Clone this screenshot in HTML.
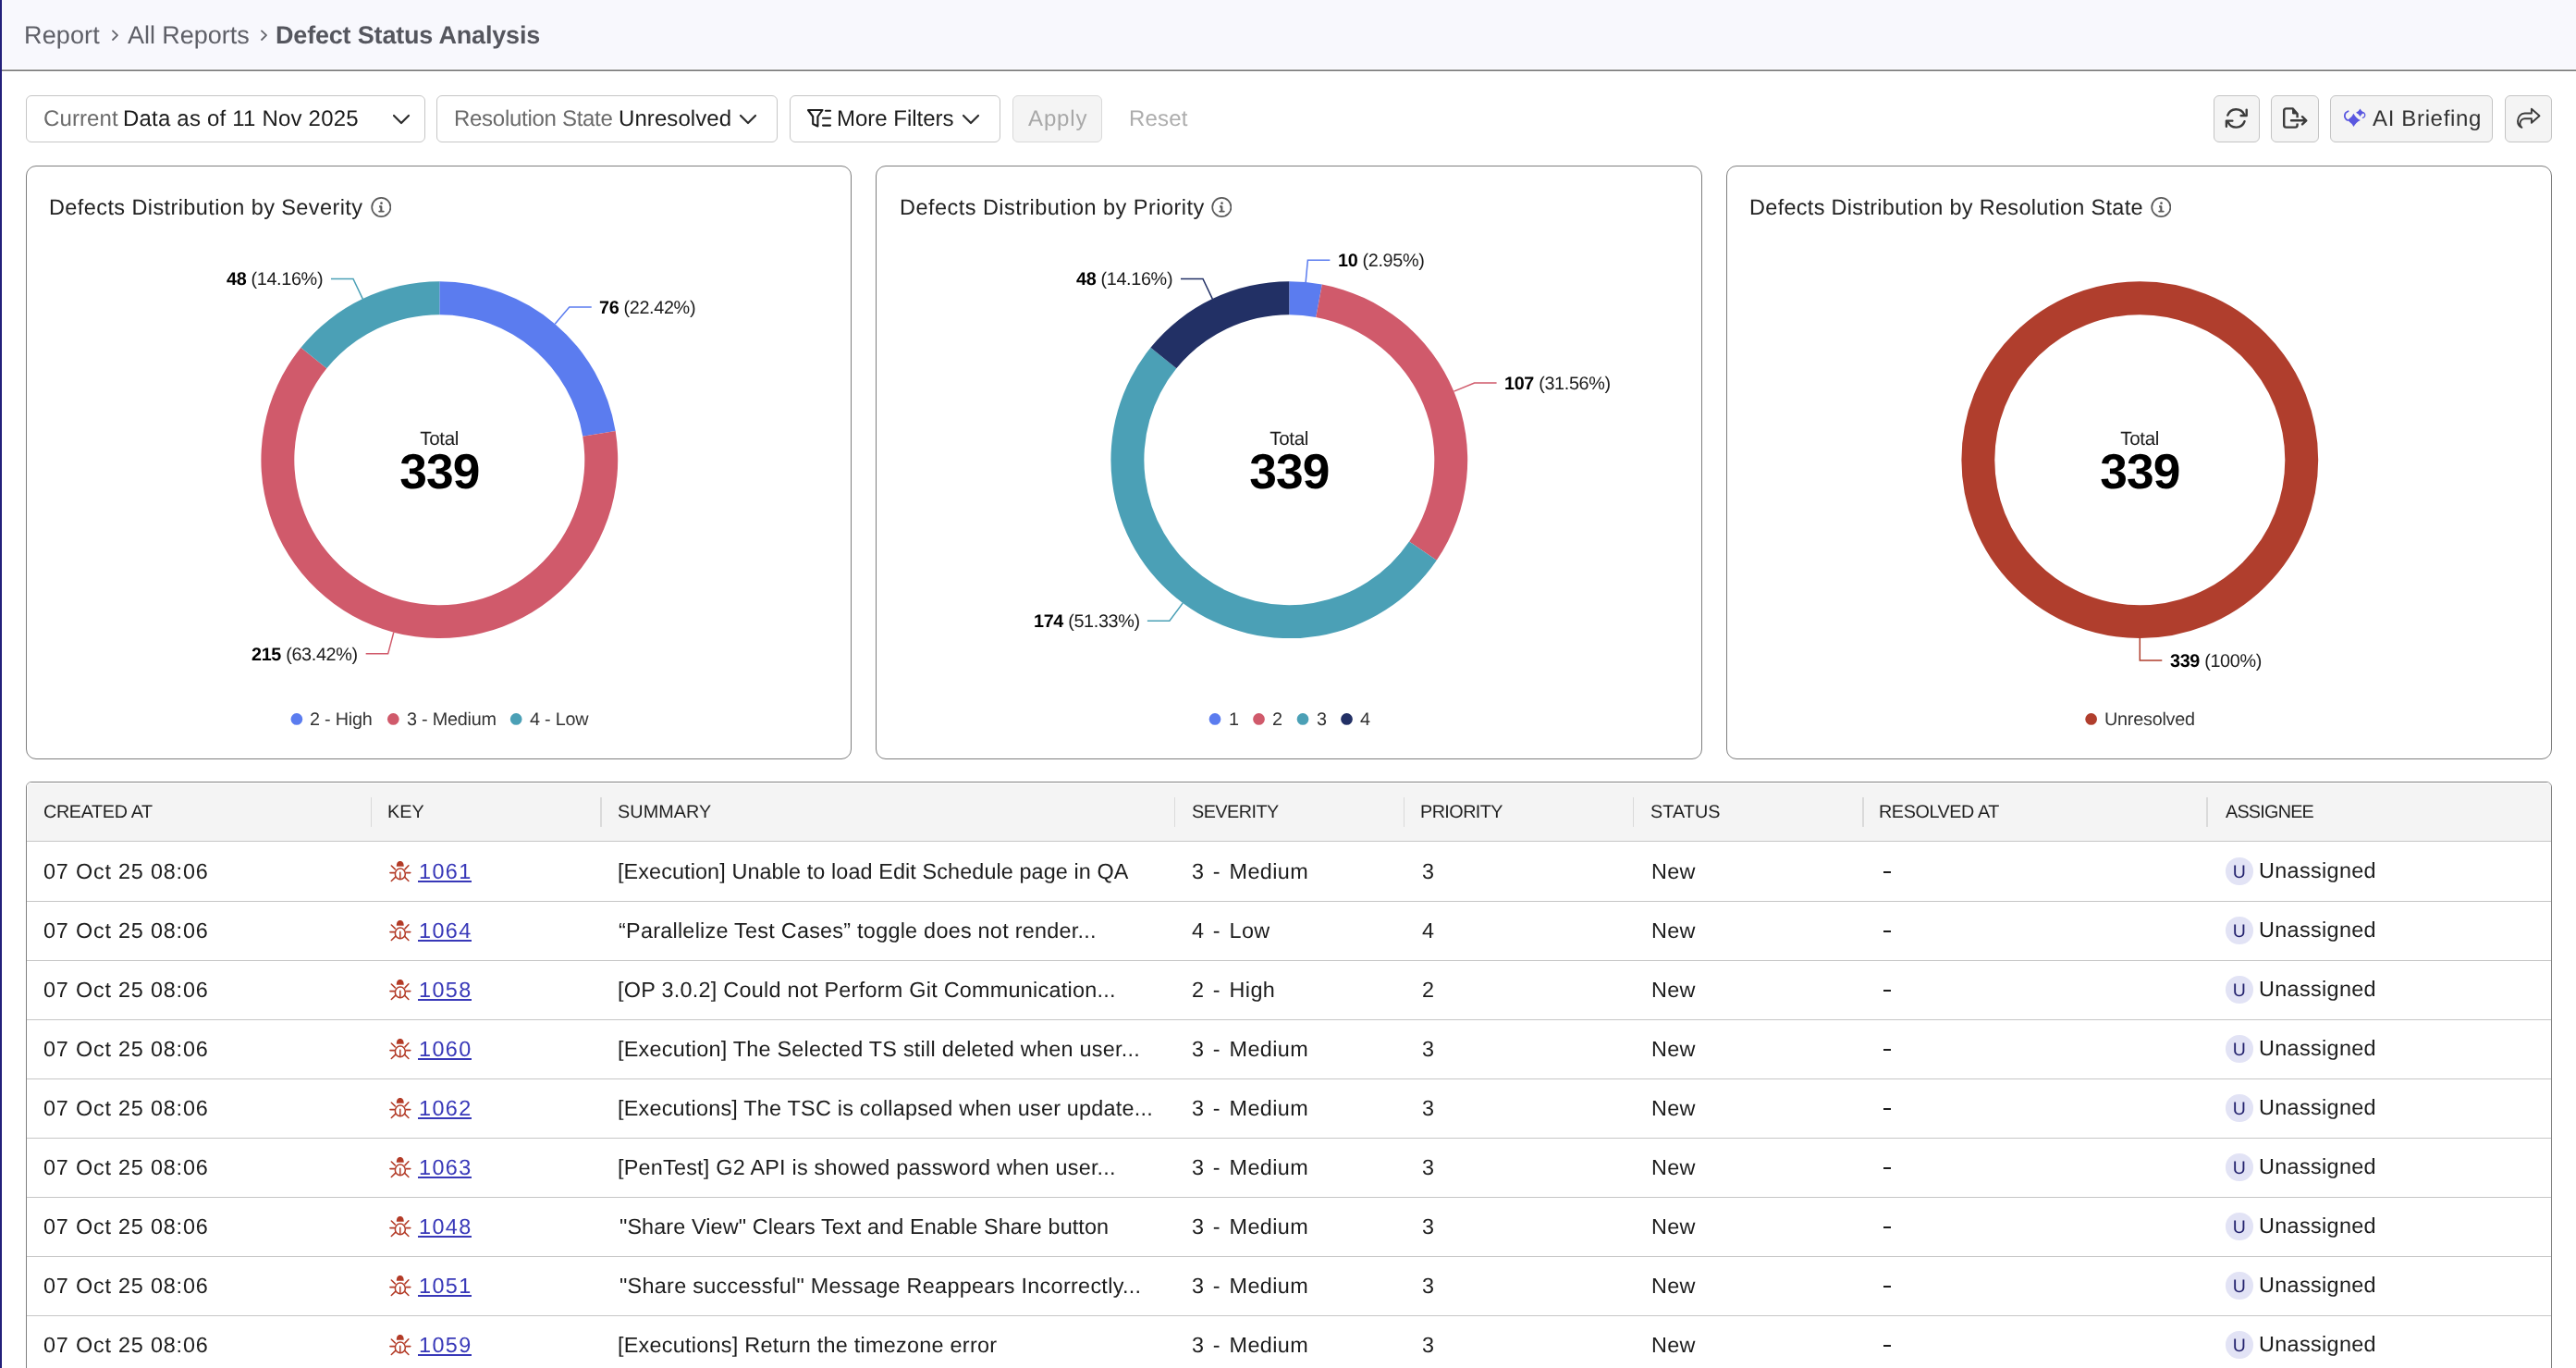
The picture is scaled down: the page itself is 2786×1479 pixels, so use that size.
<!DOCTYPE html>
<html><head><meta charset="utf-8"><title>Defect Status Analysis</title><style>
html,body{margin:0;padding:0}
body{width:2786px;height:1479px;overflow:hidden;background:#fff;position:relative;font-family:"Liberation Sans", sans-serif}
.a{position:absolute}
.t{position:absolute;white-space:nowrap;will-change:transform;text-rendering:geometricPrecision}
.lab{font-size:19.8px;line-height:19.8px;color:#1a1a1a;letter-spacing:-0.33px}
.card{box-sizing:border-box;border:1.5px solid #7e7e7e;border-radius:11px;background:#fff}
#lbar{position:absolute;left:0;top:0;width:2px;height:1479px;background:#23207a;z-index:5}
#hdr{position:absolute;left:2px;top:0;width:2784px;height:74px;background:#f8f8fd;border-bottom:1px solid #fcfcfe}
#hl1{position:absolute;left:2px;top:75px;width:2784px;height:1px;background:#ababab}
#hl2{position:absolute;left:2px;top:76px;width:2784px;height:1px;background:#7a7a7a}
</style></head><body><div id="lbar"></div>
<div id="hdr"></div><div id="hl1"></div><div id="hl2"></div>
<div class="t" style="left:26.40px;top:25.24px;font-size:27px;line-height:27px;color:#5f6068;font-weight:400;letter-spacing:0.13044052863432679px;">Report</div>
<div class="t" style="left:138.46px;top:25.24px;font-size:27px;line-height:27px;color:#5f6068;font-weight:400;letter-spacing:-0.04096916299559161px;">All Reports</div>
<div class="t" style="left:298.24px;top:25.24px;font-size:27px;line-height:27px;color:#55565e;font-weight:700;letter-spacing:-0.18333333333327909px;">Defect Status Analysis</div>
<svg class="a" style="left:121.3px;top:31px" width="9" height="14" viewBox="0 0 9 14"><path d="M1.0 2.4 L6.0 7.2 L1.0 12.0" fill="none" stroke="#64656c" stroke-width="1.8" stroke-linecap="round" stroke-linejoin="round"/></svg>
<svg class="a" style="left:282.0px;top:31px" width="9" height="14" viewBox="0 0 9 14"><path d="M1.0 2.4 L6.0 7.2 L1.0 12.0" fill="none" stroke="#64656c" stroke-width="1.8" stroke-linecap="round" stroke-linejoin="round"/></svg>
<div class="a" style="left:28px;top:103px;width:432px;height:51px;box-sizing:border-box;border:1.5px solid #c6c6c6;border-radius:6px;background:#fff"></div>
<div class="t" style="left:46.61px;top:116.88px;font-size:24px;line-height:24px;color:#6b6b6b;font-weight:400;letter-spacing:0.10600600600599075px;">Current</div>
<div class="t" style="left:132.78px;top:116.88px;font-size:24px;line-height:24px;color:#1b1b1b;font-weight:400;letter-spacing:0.2003620161515272px;">Data as of 11 Nov 2025</div>
<svg class="a" style="left:423px;top:121.6px" width="22" height="14" viewBox="-2 -2 22 14"><path d="M1 1 L9.0 9 L17 1" fill="none" stroke="#2b2b2b" stroke-width="2.2" stroke-linecap="round" stroke-linejoin="round"/></svg>
<div class="a" style="left:472px;top:103px;width:369px;height:51px;box-sizing:border-box;border:1.5px solid #c6c6c6;border-radius:6px;background:#fff"></div>
<div class="t" style="left:491.07px;top:116.88px;font-size:24px;line-height:24px;color:#6b6b6b;font-weight:400;letter-spacing:-0.28531531531539656px;">Resolution State</div>
<div class="t" style="left:668.65px;top:116.88px;font-size:24px;line-height:24px;color:#1b1b1b;font-weight:400;letter-spacing:0.08417803768680243px;">Unresolved</div>
<svg class="a" style="left:798px;top:121.6px" width="22" height="14" viewBox="-2 -2 22 14"><path d="M1 1 L9.0 9 L17 1" fill="none" stroke="#2b2b2b" stroke-width="2.2" stroke-linecap="round" stroke-linejoin="round"/></svg>
<div class="a" style="left:854px;top:103px;width:228px;height:51px;box-sizing:border-box;border:1.5px solid #c6c6c6;border-radius:6px;background:#fff"></div>
<svg class="a" style="left:868px;top:112px" width="34" height="30" viewBox="0 0 34 30"><path d="M6 7 L21.5 7 L16.4 14 L16.4 24.5 L11.2 22 L11.2 14 Z" fill="none" stroke="#1b1b1b" stroke-width="2.1" stroke-linejoin="round"/><path d="M25 7.8 H30 M22 15.7 H30 M22 23.6 H30" fill="none" stroke="#1b1b1b" stroke-width="2.1" stroke-linecap="round"/></svg>
<div class="t" style="left:904.78px;top:116.88px;font-size:24px;line-height:24px;color:#1b1b1b;font-weight:400;letter-spacing:-0.014247740563672034px;">More Filters</div>
<svg class="a" style="left:1039.4px;top:121.6px" width="22" height="14" viewBox="-2 -2 22 14"><path d="M1 1 L9.0 9 L17 1" fill="none" stroke="#2b2b2b" stroke-width="2.2" stroke-linecap="round" stroke-linejoin="round"/></svg>
<div class="a" style="left:1095px;top:103px;width:97px;height:51px;box-sizing:border-box;border:1.5px solid #d9d9d9;border-radius:6px;background:#f4f4f4"></div>
<div class="t" style="left:1111.71px;top:116.88px;font-size:24px;line-height:24px;color:#a8a8a8;font-weight:400;letter-spacing:0.8758771929826821px;">Apply</div>
<div class="t" style="left:1221.12px;top:116.88px;font-size:24px;line-height:24px;color:#adadad;font-weight:400;letter-spacing:0.1577235772361746px;">Reset</div>
<div class="a" style="left:2394px;top:103px;width:50px;height:51px;box-sizing:border-box;border:1.5px solid #c4c4c4;border-radius:6px;background:#f4f4f4"></div>
<svg class="a" style="left:2406px;top:116px" width="26" height="24" viewBox="0 0 26 24"><path d="M3.28 8.58 A9.7 9.7 0 0 1 21.19 7.80" fill="none" stroke="#3b3b3b" stroke-width="2.4" stroke-linecap="round"/><path d="M23.7 2.6 V9 H17.6" fill="none" stroke="#3b3b3b" stroke-width="2.4" stroke-linecap="round" stroke-linejoin="round"/><path d="M21.52 15.22 A9.7 9.7 0 0 1 3.61 16.00" fill="none" stroke="#3b3b3b" stroke-width="2.4" stroke-linecap="round"/><path d="M1.9 20.8 V14.6 H8.4" fill="none" stroke="#3b3b3b" stroke-width="2.4" stroke-linecap="round" stroke-linejoin="round"/></svg>
<div class="a" style="left:2456px;top:103px;width:52px;height:51px;box-sizing:border-box;border:1.5px solid #c4c4c4;border-radius:6px;background:#f4f4f4"></div>
<svg class="a" style="left:2466px;top:116px" width="32" height="24" viewBox="0 0 32 24"><path d="M18.6 11.3 V7 L13.6 1.4 H6.6 Q4.2 1.4 4.2 3.8 V19.2 Q4.2 21.6 6.6 21.6 H16.2 Q18.6 21.6 18.6 19.2 V17.5" fill="none" stroke="#3b3b3b" stroke-width="2.4" stroke-linejoin="round"/><path d="M13.6 1.6 V7 H18.4 Z" fill="#3b3b3b" stroke="#3b3b3b" stroke-width="1" stroke-linejoin="round"/><path d="M12 14.3 H28 M24 10.2 L28.3 14.3 L24 18.4" fill="none" stroke="#3b3b3b" stroke-width="2.4" stroke-linecap="round" stroke-linejoin="round"/></svg>
<div class="a" style="left:2520px;top:103px;width:176px;height:51px;box-sizing:border-box;border:1.5px solid #c4c4c4;border-radius:6px;background:#f4f4f4"></div>
<svg class="a" style="left:2530px;top:112px" width="34" height="30" viewBox="0 0 34 30"><path d="M15.5 10.7 Q17.8 15.599999999999998 22.9 17.9 Q17.8 20.2 15.5 25.099999999999998 Q13.2 20.2 8.1 17.9 Q13.2 15.599999999999998 15.5 10.7 Z" fill="#5a58e0"/><path d="M22.5 5.500000000000001 Q23.85 8.450000000000001 27.0 9.8 Q23.85 11.15 22.5 14.100000000000001 Q21.15 11.15 18.0 9.8 Q21.15 8.450000000000001 22.5 5.500000000000001 Z" fill="#5a58e0"/><path d="M8.6 17.9 C4.6 15.6 4.8 10 9.6 8.2" fill="none" stroke="#5a58e0" stroke-width="1.7" stroke-linecap="round"/><path d="M26.6 10 C28.6 12 28 14.8 25.4 15.4" fill="none" stroke="#5a58e0" stroke-width="1.3" stroke-linecap="round"/></svg>
<div class="t" style="left:2565.68px;top:116.88px;font-size:24px;line-height:24px;color:#333333;font-weight:400;letter-spacing:0.657512953368132px;">AI Briefing</div>
<div class="a" style="left:2709px;top:103px;width:51px;height:51px;box-sizing:border-box;border:1.5px solid #c4c4c4;border-radius:6px;background:#f4f4f4"></div>
<svg class="a" style="left:2716px;top:112px" width="36" height="30" viewBox="0 0 36 30"><path d="M21.9 5.7 L30.5 13.2 L21.9 20.8 V16.2 H14.6 C12 16.2 9.6 18.4 9.4 21.6 C9.3 23.2 10.2 24.8 11.4 25.9 C8.6 24.6 7 22 7 19 C7 14.4 10 10.5 14.6 10.5 H21.9 Z" fill="none" stroke="#3b3b3b" stroke-width="1.9" stroke-linejoin="round"/></svg>
<div class="a card" style="left:28px;top:179px;width:893px;height:642px"></div>
<div class="a card" style="left:947px;top:179px;width:894px;height:642px"></div>
<div class="a card" style="left:1867px;top:179px;width:893px;height:642px"></div>
<svg class="a" style="left:0;top:0" width="2786" height="840" viewBox="0 0 2786 840"><path d="M475.30 304.30 A192.9 192.9 0 0 1 665.67 466.05 L630.24 471.85 A157.0 157.0 0 0 0 475.30 340.20 Z" fill="#5b7cef"/><polyline points="600.20,350.20 615.74,331.91 639.74,331.91" fill="none" stroke="#5b7cef" stroke-width="1.5"/><path d="M665.67 466.05 A192.9 192.9 0 1 1 325.44 375.73 L353.33 398.34 A157.0 157.0 0 1 0 630.24 471.85 Z" fill="#d05a6b"/><polyline points="425.81,683.64 419.65,706.84 395.65,706.84" fill="none" stroke="#d05a6b" stroke-width="1.5"/><path d="M325.44 375.73 A192.9 192.9 0 0 1 475.30 304.30 L475.30 340.20 A157.0 157.0 0 0 0 353.33 398.34 Z" fill="#4ba0b6"/><polyline points="392.29,323.07 381.97,301.41 357.97,301.41" fill="none" stroke="#4ba0b6" stroke-width="1.5"/><circle cx="320.90" cy="777.4" r="6.35" fill="#5b7cef"/><circle cx="425.30" cy="777.4" r="6.35" fill="#d05a6b"/><circle cx="558.20" cy="777.4" r="6.35" fill="#4ba0b6"/><path d="M1394.30 304.30 A192.9 192.9 0 0 1 1429.85 307.60 L1423.23 342.89 A157.0 157.0 0 0 0 1394.30 340.20 Z" fill="#5b7cef"/><polyline points="1412.15,305.13 1414.37,281.23 1438.37,281.23" fill="none" stroke="#5b7cef" stroke-width="1.5"/><path d="M1429.85 307.60 A192.9 192.9 0 0 1 1553.75 605.76 L1524.08 585.56 A157.0 157.0 0 0 0 1423.23 342.89 Z" fill="#d05a6b"/><polyline points="1572.43,423.17 1594.59,413.96 1618.59,413.96" fill="none" stroke="#d05a6b" stroke-width="1.5"/><path d="M1553.75 605.76 A192.9 192.9 0 1 1 1244.44 375.73 L1272.33 398.34 A157.0 157.0 0 1 0 1524.08 585.56 Z" fill="#4ba0b6"/><polyline points="1279.19,651.99 1264.87,671.25 1240.87,671.25" fill="none" stroke="#4ba0b6" stroke-width="1.5"/><path d="M1244.44 375.73 A192.9 192.9 0 0 1 1394.30 304.30 L1394.30 340.20 A157.0 157.0 0 0 0 1272.33 398.34 Z" fill="#223065"/><polyline points="1311.29,323.07 1300.97,301.41 1276.97,301.41" fill="none" stroke="#223065" stroke-width="1.5"/><circle cx="1314.00" cy="777.4" r="6.35" fill="#5b7cef"/><circle cx="1361.50" cy="777.4" r="6.35" fill="#d05a6b"/><circle cx="1409.00" cy="777.4" r="6.35" fill="#4ba0b6"/><circle cx="1456.50" cy="777.4" r="6.35" fill="#223065"/><circle cx="2314.30" cy="497.2" r="174.95" fill="none" stroke="#b03e2d" stroke-width="35.90"/><polyline points="2314.30,690.10 2314.30,714.10 2338.30,714.10" fill="none" stroke="#b03e2d" stroke-width="1.5"/><circle cx="2261.65" cy="777.4" r="6.35" fill="#b03e2d"/></svg>
<div class="t" style="left:53.13px;top:213.11px;font-size:23.5px;line-height:23.5px;color:#222222;font-weight:400;letter-spacing:0.40131367683550506px;">Defects Distribution by Severity</div>
<div class="t lab" style="left:648.24px;top:323.65px"><b style="color:#000">76</b> (22.42%)</div>
<div class="t lab" style="right:2398.85px;top:698.58px"><b style="color:#000">215</b> (63.42%)</div>
<div class="t lab" style="right:2436.53px;top:293.15px"><b style="color:#000">48</b> (14.16%)</div>
<div class="t" style="left:415.30px;top:464.96px;width:120px;text-align:center;font-size:20.6px;line-height:20.6px;color:#1a1a1a;letter-spacing:-0.35px;text-indent:0.35px">Total</div>
<div class="t" style="left:395.30px;top:484.08px;width:160px;text-align:center;font-size:53.3px;line-height:53.3px;color:#000;font-weight:700;letter-spacing:-0.9px;text-indent:0.9px">339</div>
<svg class="a" style="left:400.80px;top:212.5px" width="22" height="22" viewBox="0 0 22 22"><circle cx="11.3" cy="10.95" r="10.1" fill="none" stroke="#5a5a5a" stroke-width="1.7"/><circle cx="11.5" cy="6.7" r="1.35" fill="#5a5a5a"/><path d="M9.1 10.4 H11.3 V15.4" fill="none" stroke="#5a5a5a" stroke-width="2.1" stroke-linejoin="round"/><path d="M9.2 15.6 H13.8" fill="none" stroke="#5a5a5a" stroke-width="1.9" stroke-linecap="round"/></svg>
<div class="t" style="left:335.45px;top:768.84px;font-size:19.8px;line-height:19.8px;color:#333333;font-weight:400;letter-spacing:-0.22px;white-space:nowrap">2 - High</div>
<div class="t" style="left:439.85px;top:768.84px;font-size:19.8px;line-height:19.8px;color:#333333;font-weight:400;letter-spacing:-0.22px;white-space:nowrap">3 - Medium</div>
<div class="t" style="left:572.75px;top:768.84px;font-size:19.8px;line-height:19.8px;color:#333333;font-weight:400;letter-spacing:-0.22px;white-space:nowrap">4 - Low</div>
<div class="t" style="left:972.95px;top:213.11px;font-size:23.5px;line-height:23.5px;color:#222222;font-weight:400;letter-spacing:0.4646134384274502px;">Defects Distribution by Priority</div>
<div class="t lab" style="left:1446.87px;top:272.97px"><b style="color:#000">10</b> (2.95%)</div>
<div class="t lab" style="left:1627.09px;top:405.70px"><b style="color:#000">107</b> (31.56%)</div>
<div class="t lab" style="right:1553.63px;top:662.99px"><b style="color:#000">174</b> (51.33%)</div>
<div class="t lab" style="right:1517.53px;top:293.15px"><b style="color:#000">48</b> (14.16%)</div>
<div class="t" style="left:1334.30px;top:464.96px;width:120px;text-align:center;font-size:20.6px;line-height:20.6px;color:#1a1a1a;letter-spacing:-0.35px;text-indent:0.35px">Total</div>
<div class="t" style="left:1314.30px;top:484.08px;width:160px;text-align:center;font-size:53.3px;line-height:53.3px;color:#000;font-weight:700;letter-spacing:-0.9px;text-indent:0.9px">339</div>
<svg class="a" style="left:1309.50px;top:212.5px" width="22" height="22" viewBox="0 0 22 22"><circle cx="11.3" cy="10.95" r="10.1" fill="none" stroke="#5a5a5a" stroke-width="1.7"/><circle cx="11.5" cy="6.7" r="1.35" fill="#5a5a5a"/><path d="M9.1 10.4 H11.3 V15.4" fill="none" stroke="#5a5a5a" stroke-width="2.1" stroke-linejoin="round"/><path d="M9.2 15.6 H13.8" fill="none" stroke="#5a5a5a" stroke-width="1.9" stroke-linecap="round"/></svg>
<div class="t" style="left:1328.55px;top:768.84px;font-size:19.8px;line-height:19.8px;color:#333333;font-weight:400;letter-spacing:-0.22px;white-space:nowrap">1</div>
<div class="t" style="left:1376.05px;top:768.84px;font-size:19.8px;line-height:19.8px;color:#333333;font-weight:400;letter-spacing:-0.22px;white-space:nowrap">2</div>
<div class="t" style="left:1423.55px;top:768.84px;font-size:19.8px;line-height:19.8px;color:#333333;font-weight:400;letter-spacing:-0.22px;white-space:nowrap">3</div>
<div class="t" style="left:1471.05px;top:768.84px;font-size:19.8px;line-height:19.8px;color:#333333;font-weight:400;letter-spacing:-0.22px;white-space:nowrap">4</div>
<div class="t" style="left:1892.13px;top:213.11px;font-size:23.5px;line-height:23.5px;color:#222222;font-weight:400;letter-spacing:0.2958463858916776px;">Defects Distribution by Resolution State</div>
<div class="t lab" style="left:2346.80px;top:705.84px"><b style="color:#000">339</b> (100%)</div>
<div class="t" style="left:2254.30px;top:464.96px;width:120px;text-align:center;font-size:20.6px;line-height:20.6px;color:#1a1a1a;letter-spacing:-0.35px;text-indent:0.35px">Total</div>
<div class="t" style="left:2234.30px;top:484.08px;width:160px;text-align:center;font-size:53.3px;line-height:53.3px;color:#000;font-weight:700;letter-spacing:-0.9px;text-indent:0.9px">339</div>
<svg class="a" style="left:2325.90px;top:212.5px" width="22" height="22" viewBox="0 0 22 22"><circle cx="11.3" cy="10.95" r="10.1" fill="none" stroke="#5a5a5a" stroke-width="1.7"/><circle cx="11.5" cy="6.7" r="1.35" fill="#5a5a5a"/><path d="M9.1 10.4 H11.3 V15.4" fill="none" stroke="#5a5a5a" stroke-width="2.1" stroke-linejoin="round"/><path d="M9.2 15.6 H13.8" fill="none" stroke="#5a5a5a" stroke-width="1.9" stroke-linecap="round"/></svg>
<div class="t" style="left:2276.20px;top:768.84px;font-size:19.8px;line-height:19.8px;color:#333333;font-weight:400;letter-spacing:-0.22px;white-space:nowrap">Unresolved</div>
<div class="a" style="left:28px;top:845px;width:2732px;height:800px;box-sizing:border-box;border:1px solid #818181;border-radius:6px;overflow:hidden;background:#fff"><div style="height:63px;background:#f4f4f4;border-top:1px solid #fff;border-left:1px solid #fff"></div></div>
<div class="a" style="left:29px;top:909px;width:2730px;height:1px;background:#c6c6c6"></div>
<div class="a" style="left:29px;top:974px;width:2730px;height:1px;background:#c6c6c6"></div>
<div class="a" style="left:29px;top:1038px;width:2730px;height:1px;background:#c6c6c6"></div>
<div class="a" style="left:29px;top:1102px;width:2730px;height:1px;background:#c6c6c6"></div>
<div class="a" style="left:29px;top:1166px;width:2730px;height:1px;background:#c6c6c6"></div>
<div class="a" style="left:29px;top:1230px;width:2730px;height:1px;background:#c6c6c6"></div>
<div class="a" style="left:29px;top:1294px;width:2730px;height:1px;background:#c6c6c6"></div>
<div class="a" style="left:29px;top:1358px;width:2730px;height:1px;background:#c6c6c6"></div>
<div class="a" style="left:29px;top:1422px;width:2730px;height:1px;background:#c6c6c6"></div>
<div class="t" style="left:47.01px;top:868.64px;font-size:19.8px;line-height:19.8px;color:#1f1f1f;font-weight:400;letter-spacing:-0.3481046774473865px;">CREATED AT</div>
<div class="a" style="left:400.80px;top:861.5px;width:1.5px;height:32px;background:#dadada"></div>
<div class="t" style="left:418.72px;top:868.64px;font-size:19.8px;line-height:19.8px;color:#1f1f1f;font-weight:400;letter-spacing:0.05985915492918821px;">KEY</div>
<div class="a" style="left:649.00px;top:861.5px;width:1.5px;height:32px;background:#dadada"></div>
<div class="t" style="left:667.84px;top:868.64px;font-size:19.8px;line-height:19.8px;color:#1f1f1f;font-weight:400;letter-spacing:0.07999478351589809px;">SUMMARY</div>
<div class="a" style="left:1269.50px;top:861.5px;width:1.5px;height:32px;background:#dadada"></div>
<div class="t" style="left:1288.73px;top:868.64px;font-size:19.8px;line-height:19.8px;color:#1f1f1f;font-weight:400;letter-spacing:-0.5194835680750913px;">SEVERITY</div>
<div class="a" style="left:1517.70px;top:861.5px;width:1.5px;height:32px;background:#dadada"></div>
<div class="t" style="left:1535.95px;top:868.64px;font-size:19.8px;line-height:19.8px;color:#1f1f1f;font-weight:400;letter-spacing:-0.556013860943482px;">PRIORITY</div>
<div class="a" style="left:1765.90px;top:861.5px;width:1.5px;height:32px;background:#dadada"></div>
<div class="t" style="left:1784.85px;top:868.64px;font-size:19.8px;line-height:19.8px;color:#1f1f1f;font-weight:400;letter-spacing:0.09410015649468728px;">STATUS</div>
<div class="a" style="left:2014.10px;top:861.5px;width:1.5px;height:32px;background:#dadada"></div>
<div class="t" style="left:2032.35px;top:868.64px;font-size:19.8px;line-height:19.8px;color:#1f1f1f;font-weight:400;letter-spacing:-0.4181220657275385px;">RESOLVED AT</div>
<div class="a" style="left:2386.40px;top:861.5px;width:1.5px;height:32px;background:#dadada"></div>
<div class="t" style="left:2406.73px;top:868.64px;font-size:19.8px;line-height:19.8px;color:#1f1f1f;font-weight:400;letter-spacing:-0.7659624413139808px;">ASSIGNEE</div>
<div class="t" style="left:47.12px;top:930.99px;font-size:23.4px;line-height:23.4px;color:#1c1c1c;font-weight:400;letter-spacing:0.8060834906649742px;">07 Oct 25 08:06</div>
<svg class="a" style="left:420.00px;top:930.00px" width="26" height="25" viewBox="0 0 26 25"><path d="M8.8 6.7 C8.8 2.4 10.6 1.1 12.75 1.1 C14.9 1.1 16.7 2.4 16.7 6.7 Z" fill="#b33b27"/><ellipse cx="12.85" cy="14.9" rx="5.5" ry="5.85" fill="none" stroke="#b33b27" stroke-width="1.55"/><path d="M12.75 13.2 V20 M3.3 6 L7.3 9.9 M21.9 5.8 L18 9.9 M1.9 13.6 H6.6 M19.3 13.6 H23.8 M3.3 22.5 L7.3 18.6 M21.9 22.5 L18 18.6" fill="none" stroke="#b33b27" stroke-width="1.55" stroke-linecap="round"/></svg>
<div class="t" style="left:452.67px;top:930.99px;font-size:23.4px;line-height:23.4px;color:#3838b8;font-weight:400;letter-spacing:1.4034825870645395px;">1061</div>
<div class="a" style="left:452.00px;top:952.10px;width:58px;height:1.8px;background:#3838b8"></div>
<div class="t" style="left:668.32px;top:930.99px;font-size:23.4px;line-height:23.4px;color:#1c1c1c;font-weight:400;letter-spacing:0.09955653450803084px;">[Execution] Unable to load Edit Schedule page in QA</div>
<div class="t" style="left:1289.41px;top:930.99px;font-size:23.4px;line-height:23.4px;color:#1c1c1c;font-weight:400;letter-spacing:0.42067221406422406px;word-spacing:2.5px">3&nbsp;-&nbsp;Medium</div>
<div class="t" style="left:1537.70px;top:930.99px;font-size:23.4px;line-height:23.4px;color:#1c1c1c;font-weight:400;letter-spacing:0.2px;">3</div>
<div class="t" style="left:1785.66px;top:930.99px;font-size:23.4px;line-height:23.4px;color:#1c1c1c;font-weight:400;letter-spacing:0.2427312775330847px;">New</div>
<div class="a" style="left:2037.4px;top:942.20px;width:7.3px;height:1.8px;background:#1c1c1c"></div>
<div class="a" style="left:2407.20px;top:927.10px;width:29.6px;height:29.6px;border-radius:50%;background:#e2e3f5"></div>
<div class="t" style="left:2407.20px;top:933.99px;width:29.6px;text-align:center;font-size:19.5px;line-height:19.5px;color:#24236e">U</div>
<div class="t" style="left:2443.39px;top:930.09px;font-size:23.4px;line-height:23.4px;color:#1c1c1c;font-weight:400;letter-spacing:0.3435144395496738px;">Unassigned</div>
<div class="t" style="left:47.12px;top:994.99px;font-size:23.4px;line-height:23.4px;color:#1c1c1c;font-weight:400;letter-spacing:0.8060834906649742px;">07 Oct 25 08:06</div>
<svg class="a" style="left:420.00px;top:994.00px" width="26" height="25" viewBox="0 0 26 25"><path d="M8.8 6.7 C8.8 2.4 10.6 1.1 12.75 1.1 C14.9 1.1 16.7 2.4 16.7 6.7 Z" fill="#b33b27"/><ellipse cx="12.85" cy="14.9" rx="5.5" ry="5.85" fill="none" stroke="#b33b27" stroke-width="1.55"/><path d="M12.75 13.2 V20 M3.3 6 L7.3 9.9 M21.9 5.8 L18 9.9 M1.9 13.6 H6.6 M19.3 13.6 H23.8 M3.3 22.5 L7.3 18.6 M21.9 22.5 L18 18.6" fill="none" stroke="#b33b27" stroke-width="1.55" stroke-linecap="round"/></svg>
<div class="t" style="left:452.67px;top:994.99px;font-size:23.4px;line-height:23.4px;color:#3838b8;font-weight:400;letter-spacing:1.4034825870645395px;">1064</div>
<div class="a" style="left:452.00px;top:1016.10px;width:58px;height:1.8px;background:#3838b8"></div>
<div class="t" style="left:669.18px;top:994.99px;font-size:23.4px;line-height:23.4px;color:#1c1c1c;font-weight:400;letter-spacing:0.2542255986094747px;">&#8220;Parallelize Test Cases&#8221; toggle does not render...</div>
<div class="t" style="left:1289.41px;top:994.99px;font-size:23.4px;line-height:23.4px;color:#1c1c1c;font-weight:400;letter-spacing:0.42067221406422406px;word-spacing:2.5px">4&nbsp;-&nbsp;Low</div>
<div class="t" style="left:1537.70px;top:994.99px;font-size:23.4px;line-height:23.4px;color:#1c1c1c;font-weight:400;letter-spacing:0.2px;">4</div>
<div class="t" style="left:1785.66px;top:994.99px;font-size:23.4px;line-height:23.4px;color:#1c1c1c;font-weight:400;letter-spacing:0.2427312775330847px;">New</div>
<div class="a" style="left:2037.4px;top:1006.20px;width:7.3px;height:1.8px;background:#1c1c1c"></div>
<div class="a" style="left:2407.20px;top:991.10px;width:29.6px;height:29.6px;border-radius:50%;background:#e2e3f5"></div>
<div class="t" style="left:2407.20px;top:997.99px;width:29.6px;text-align:center;font-size:19.5px;line-height:19.5px;color:#24236e">U</div>
<div class="t" style="left:2443.39px;top:994.09px;font-size:23.4px;line-height:23.4px;color:#1c1c1c;font-weight:400;letter-spacing:0.3435144395496738px;">Unassigned</div>
<div class="t" style="left:47.12px;top:1058.99px;font-size:23.4px;line-height:23.4px;color:#1c1c1c;font-weight:400;letter-spacing:0.8060834906649742px;">07 Oct 25 08:06</div>
<svg class="a" style="left:420.00px;top:1058.00px" width="26" height="25" viewBox="0 0 26 25"><path d="M8.8 6.7 C8.8 2.4 10.6 1.1 12.75 1.1 C14.9 1.1 16.7 2.4 16.7 6.7 Z" fill="#b33b27"/><ellipse cx="12.85" cy="14.9" rx="5.5" ry="5.85" fill="none" stroke="#b33b27" stroke-width="1.55"/><path d="M12.75 13.2 V20 M3.3 6 L7.3 9.9 M21.9 5.8 L18 9.9 M1.9 13.6 H6.6 M19.3 13.6 H23.8 M3.3 22.5 L7.3 18.6 M21.9 22.5 L18 18.6" fill="none" stroke="#b33b27" stroke-width="1.55" stroke-linecap="round"/></svg>
<div class="t" style="left:452.67px;top:1058.99px;font-size:23.4px;line-height:23.4px;color:#3838b8;font-weight:400;letter-spacing:1.4034825870645395px;">1058</div>
<div class="a" style="left:452.00px;top:1080.10px;width:58px;height:1.8px;background:#3838b8"></div>
<div class="t" style="left:668.32px;top:1058.99px;font-size:23.4px;line-height:23.4px;color:#1c1c1c;font-weight:400;letter-spacing:0.2597347038668528px;">[OP 3.0.2] Could not Perform Git Communication...</div>
<div class="t" style="left:1289.41px;top:1058.99px;font-size:23.4px;line-height:23.4px;color:#1c1c1c;font-weight:400;letter-spacing:0.42067221406422406px;word-spacing:2.5px">2&nbsp;-&nbsp;High</div>
<div class="t" style="left:1537.70px;top:1058.99px;font-size:23.4px;line-height:23.4px;color:#1c1c1c;font-weight:400;letter-spacing:0.2px;">2</div>
<div class="t" style="left:1785.66px;top:1058.99px;font-size:23.4px;line-height:23.4px;color:#1c1c1c;font-weight:400;letter-spacing:0.2427312775330847px;">New</div>
<div class="a" style="left:2037.4px;top:1070.20px;width:7.3px;height:1.8px;background:#1c1c1c"></div>
<div class="a" style="left:2407.20px;top:1055.10px;width:29.6px;height:29.6px;border-radius:50%;background:#e2e3f5"></div>
<div class="t" style="left:2407.20px;top:1061.99px;width:29.6px;text-align:center;font-size:19.5px;line-height:19.5px;color:#24236e">U</div>
<div class="t" style="left:2443.39px;top:1058.09px;font-size:23.4px;line-height:23.4px;color:#1c1c1c;font-weight:400;letter-spacing:0.3435144395496738px;">Unassigned</div>
<div class="t" style="left:47.12px;top:1122.99px;font-size:23.4px;line-height:23.4px;color:#1c1c1c;font-weight:400;letter-spacing:0.8060834906649742px;">07 Oct 25 08:06</div>
<svg class="a" style="left:420.00px;top:1122.00px" width="26" height="25" viewBox="0 0 26 25"><path d="M8.8 6.7 C8.8 2.4 10.6 1.1 12.75 1.1 C14.9 1.1 16.7 2.4 16.7 6.7 Z" fill="#b33b27"/><ellipse cx="12.85" cy="14.9" rx="5.5" ry="5.85" fill="none" stroke="#b33b27" stroke-width="1.55"/><path d="M12.75 13.2 V20 M3.3 6 L7.3 9.9 M21.9 5.8 L18 9.9 M1.9 13.6 H6.6 M19.3 13.6 H23.8 M3.3 22.5 L7.3 18.6 M21.9 22.5 L18 18.6" fill="none" stroke="#b33b27" stroke-width="1.55" stroke-linecap="round"/></svg>
<div class="t" style="left:452.67px;top:1122.99px;font-size:23.4px;line-height:23.4px;color:#3838b8;font-weight:400;letter-spacing:1.4034825870645395px;">1060</div>
<div class="a" style="left:452.00px;top:1144.10px;width:58px;height:1.8px;background:#3838b8"></div>
<div class="t" style="left:668.32px;top:1122.99px;font-size:23.4px;line-height:23.4px;color:#1c1c1c;font-weight:400;letter-spacing:0.24422569473300204px;">[Execution] The Selected TS still deleted when user...</div>
<div class="t" style="left:1289.41px;top:1122.99px;font-size:23.4px;line-height:23.4px;color:#1c1c1c;font-weight:400;letter-spacing:0.42067221406422406px;word-spacing:2.5px">3&nbsp;-&nbsp;Medium</div>
<div class="t" style="left:1537.70px;top:1122.99px;font-size:23.4px;line-height:23.4px;color:#1c1c1c;font-weight:400;letter-spacing:0.2px;">3</div>
<div class="t" style="left:1785.66px;top:1122.99px;font-size:23.4px;line-height:23.4px;color:#1c1c1c;font-weight:400;letter-spacing:0.2427312775330847px;">New</div>
<div class="a" style="left:2037.4px;top:1134.20px;width:7.3px;height:1.8px;background:#1c1c1c"></div>
<div class="a" style="left:2407.20px;top:1119.10px;width:29.6px;height:29.6px;border-radius:50%;background:#e2e3f5"></div>
<div class="t" style="left:2407.20px;top:1125.99px;width:29.6px;text-align:center;font-size:19.5px;line-height:19.5px;color:#24236e">U</div>
<div class="t" style="left:2443.39px;top:1122.09px;font-size:23.4px;line-height:23.4px;color:#1c1c1c;font-weight:400;letter-spacing:0.3435144395496738px;">Unassigned</div>
<div class="t" style="left:47.12px;top:1186.99px;font-size:23.4px;line-height:23.4px;color:#1c1c1c;font-weight:400;letter-spacing:0.8060834906649742px;">07 Oct 25 08:06</div>
<svg class="a" style="left:420.00px;top:1186.00px" width="26" height="25" viewBox="0 0 26 25"><path d="M8.8 6.7 C8.8 2.4 10.6 1.1 12.75 1.1 C14.9 1.1 16.7 2.4 16.7 6.7 Z" fill="#b33b27"/><ellipse cx="12.85" cy="14.9" rx="5.5" ry="5.85" fill="none" stroke="#b33b27" stroke-width="1.55"/><path d="M12.75 13.2 V20 M3.3 6 L7.3 9.9 M21.9 5.8 L18 9.9 M1.9 13.6 H6.6 M19.3 13.6 H23.8 M3.3 22.5 L7.3 18.6 M21.9 22.5 L18 18.6" fill="none" stroke="#b33b27" stroke-width="1.55" stroke-linecap="round"/></svg>
<div class="t" style="left:452.67px;top:1186.99px;font-size:23.4px;line-height:23.4px;color:#3838b8;font-weight:400;letter-spacing:1.4034825870645395px;">1062</div>
<div class="a" style="left:452.00px;top:1208.10px;width:58px;height:1.8px;background:#3838b8"></div>
<div class="t" style="left:668.32px;top:1186.99px;font-size:23.4px;line-height:23.4px;color:#1c1c1c;font-weight:400;letter-spacing:0.21758138484125025px;">[Executions] The TSC is collapsed when user update...</div>
<div class="t" style="left:1289.41px;top:1186.99px;font-size:23.4px;line-height:23.4px;color:#1c1c1c;font-weight:400;letter-spacing:0.42067221406422406px;word-spacing:2.5px">3&nbsp;-&nbsp;Medium</div>
<div class="t" style="left:1537.70px;top:1186.99px;font-size:23.4px;line-height:23.4px;color:#1c1c1c;font-weight:400;letter-spacing:0.2px;">3</div>
<div class="t" style="left:1785.66px;top:1186.99px;font-size:23.4px;line-height:23.4px;color:#1c1c1c;font-weight:400;letter-spacing:0.2427312775330847px;">New</div>
<div class="a" style="left:2037.4px;top:1198.20px;width:7.3px;height:1.8px;background:#1c1c1c"></div>
<div class="a" style="left:2407.20px;top:1183.10px;width:29.6px;height:29.6px;border-radius:50%;background:#e2e3f5"></div>
<div class="t" style="left:2407.20px;top:1189.99px;width:29.6px;text-align:center;font-size:19.5px;line-height:19.5px;color:#24236e">U</div>
<div class="t" style="left:2443.39px;top:1186.09px;font-size:23.4px;line-height:23.4px;color:#1c1c1c;font-weight:400;letter-spacing:0.3435144395496738px;">Unassigned</div>
<div class="t" style="left:47.12px;top:1250.99px;font-size:23.4px;line-height:23.4px;color:#1c1c1c;font-weight:400;letter-spacing:0.8060834906649742px;">07 Oct 25 08:06</div>
<svg class="a" style="left:420.00px;top:1250.00px" width="26" height="25" viewBox="0 0 26 25"><path d="M8.8 6.7 C8.8 2.4 10.6 1.1 12.75 1.1 C14.9 1.1 16.7 2.4 16.7 6.7 Z" fill="#b33b27"/><ellipse cx="12.85" cy="14.9" rx="5.5" ry="5.85" fill="none" stroke="#b33b27" stroke-width="1.55"/><path d="M12.75 13.2 V20 M3.3 6 L7.3 9.9 M21.9 5.8 L18 9.9 M1.9 13.6 H6.6 M19.3 13.6 H23.8 M3.3 22.5 L7.3 18.6 M21.9 22.5 L18 18.6" fill="none" stroke="#b33b27" stroke-width="1.55" stroke-linecap="round"/></svg>
<div class="t" style="left:452.67px;top:1250.99px;font-size:23.4px;line-height:23.4px;color:#3838b8;font-weight:400;letter-spacing:1.4034825870645395px;">1063</div>
<div class="a" style="left:452.00px;top:1272.10px;width:58px;height:1.8px;background:#3838b8"></div>
<div class="t" style="left:668.32px;top:1250.99px;font-size:23.4px;line-height:23.4px;color:#1c1c1c;font-weight:400;letter-spacing:0.22745530665165664px;">[PenTest] G2 API is showed password when user...</div>
<div class="t" style="left:1289.41px;top:1250.99px;font-size:23.4px;line-height:23.4px;color:#1c1c1c;font-weight:400;letter-spacing:0.42067221406422406px;word-spacing:2.5px">3&nbsp;-&nbsp;Medium</div>
<div class="t" style="left:1537.70px;top:1250.99px;font-size:23.4px;line-height:23.4px;color:#1c1c1c;font-weight:400;letter-spacing:0.2px;">3</div>
<div class="t" style="left:1785.66px;top:1250.99px;font-size:23.4px;line-height:23.4px;color:#1c1c1c;font-weight:400;letter-spacing:0.2427312775330847px;">New</div>
<div class="a" style="left:2037.4px;top:1262.20px;width:7.3px;height:1.8px;background:#1c1c1c"></div>
<div class="a" style="left:2407.20px;top:1247.10px;width:29.6px;height:29.6px;border-radius:50%;background:#e2e3f5"></div>
<div class="t" style="left:2407.20px;top:1253.99px;width:29.6px;text-align:center;font-size:19.5px;line-height:19.5px;color:#24236e">U</div>
<div class="t" style="left:2443.39px;top:1250.09px;font-size:23.4px;line-height:23.4px;color:#1c1c1c;font-weight:400;letter-spacing:0.3435144395496738px;">Unassigned</div>
<div class="t" style="left:47.12px;top:1314.99px;font-size:23.4px;line-height:23.4px;color:#1c1c1c;font-weight:400;letter-spacing:0.8060834906649742px;">07 Oct 25 08:06</div>
<svg class="a" style="left:420.00px;top:1314.00px" width="26" height="25" viewBox="0 0 26 25"><path d="M8.8 6.7 C8.8 2.4 10.6 1.1 12.75 1.1 C14.9 1.1 16.7 2.4 16.7 6.7 Z" fill="#b33b27"/><ellipse cx="12.85" cy="14.9" rx="5.5" ry="5.85" fill="none" stroke="#b33b27" stroke-width="1.55"/><path d="M12.75 13.2 V20 M3.3 6 L7.3 9.9 M21.9 5.8 L18 9.9 M1.9 13.6 H6.6 M19.3 13.6 H23.8 M3.3 22.5 L7.3 18.6 M21.9 22.5 L18 18.6" fill="none" stroke="#b33b27" stroke-width="1.55" stroke-linecap="round"/></svg>
<div class="t" style="left:452.67px;top:1314.99px;font-size:23.4px;line-height:23.4px;color:#3838b8;font-weight:400;letter-spacing:1.4034825870645395px;">1048</div>
<div class="a" style="left:452.00px;top:1336.10px;width:58px;height:1.8px;background:#3838b8"></div>
<div class="t" style="left:669.59px;top:1314.99px;font-size:23.4px;line-height:23.4px;color:#1c1c1c;font-weight:400;letter-spacing:0.10470090917610785px;">"Share View" Clears Text and Enable Share button</div>
<div class="t" style="left:1289.41px;top:1314.99px;font-size:23.4px;line-height:23.4px;color:#1c1c1c;font-weight:400;letter-spacing:0.42067221406422406px;word-spacing:2.5px">3&nbsp;-&nbsp;Medium</div>
<div class="t" style="left:1537.70px;top:1314.99px;font-size:23.4px;line-height:23.4px;color:#1c1c1c;font-weight:400;letter-spacing:0.2px;">3</div>
<div class="t" style="left:1785.66px;top:1314.99px;font-size:23.4px;line-height:23.4px;color:#1c1c1c;font-weight:400;letter-spacing:0.2427312775330847px;">New</div>
<div class="a" style="left:2037.4px;top:1326.20px;width:7.3px;height:1.8px;background:#1c1c1c"></div>
<div class="a" style="left:2407.20px;top:1311.10px;width:29.6px;height:29.6px;border-radius:50%;background:#e2e3f5"></div>
<div class="t" style="left:2407.20px;top:1317.99px;width:29.6px;text-align:center;font-size:19.5px;line-height:19.5px;color:#24236e">U</div>
<div class="t" style="left:2443.39px;top:1314.09px;font-size:23.4px;line-height:23.4px;color:#1c1c1c;font-weight:400;letter-spacing:0.3435144395496738px;">Unassigned</div>
<div class="t" style="left:47.12px;top:1378.99px;font-size:23.4px;line-height:23.4px;color:#1c1c1c;font-weight:400;letter-spacing:0.8060834906649742px;">07 Oct 25 08:06</div>
<svg class="a" style="left:420.00px;top:1378.00px" width="26" height="25" viewBox="0 0 26 25"><path d="M8.8 6.7 C8.8 2.4 10.6 1.1 12.75 1.1 C14.9 1.1 16.7 2.4 16.7 6.7 Z" fill="#b33b27"/><ellipse cx="12.85" cy="14.9" rx="5.5" ry="5.85" fill="none" stroke="#b33b27" stroke-width="1.55"/><path d="M12.75 13.2 V20 M3.3 6 L7.3 9.9 M21.9 5.8 L18 9.9 M1.9 13.6 H6.6 M19.3 13.6 H23.8 M3.3 22.5 L7.3 18.6 M21.9 22.5 L18 18.6" fill="none" stroke="#b33b27" stroke-width="1.55" stroke-linecap="round"/></svg>
<div class="t" style="left:452.67px;top:1378.99px;font-size:23.4px;line-height:23.4px;color:#3838b8;font-weight:400;letter-spacing:1.4034825870645395px;">1051</div>
<div class="a" style="left:452.00px;top:1400.10px;width:58px;height:1.8px;background:#3838b8"></div>
<div class="t" style="left:669.59px;top:1378.99px;font-size:23.4px;line-height:23.4px;color:#1c1c1c;font-weight:400;letter-spacing:0.29596769456675703px;">"Share successful" Message Reappears Incorrectly...</div>
<div class="t" style="left:1289.41px;top:1378.99px;font-size:23.4px;line-height:23.4px;color:#1c1c1c;font-weight:400;letter-spacing:0.42067221406422406px;word-spacing:2.5px">3&nbsp;-&nbsp;Medium</div>
<div class="t" style="left:1537.70px;top:1378.99px;font-size:23.4px;line-height:23.4px;color:#1c1c1c;font-weight:400;letter-spacing:0.2px;">3</div>
<div class="t" style="left:1785.66px;top:1378.99px;font-size:23.4px;line-height:23.4px;color:#1c1c1c;font-weight:400;letter-spacing:0.2427312775330847px;">New</div>
<div class="a" style="left:2037.4px;top:1390.20px;width:7.3px;height:1.8px;background:#1c1c1c"></div>
<div class="a" style="left:2407.20px;top:1375.10px;width:29.6px;height:29.6px;border-radius:50%;background:#e2e3f5"></div>
<div class="t" style="left:2407.20px;top:1381.99px;width:29.6px;text-align:center;font-size:19.5px;line-height:19.5px;color:#24236e">U</div>
<div class="t" style="left:2443.39px;top:1378.09px;font-size:23.4px;line-height:23.4px;color:#1c1c1c;font-weight:400;letter-spacing:0.3435144395496738px;">Unassigned</div>
<div class="t" style="left:47.12px;top:1442.99px;font-size:23.4px;line-height:23.4px;color:#1c1c1c;font-weight:400;letter-spacing:0.8060834906649742px;">07 Oct 25 08:06</div>
<svg class="a" style="left:420.00px;top:1442.00px" width="26" height="25" viewBox="0 0 26 25"><path d="M8.8 6.7 C8.8 2.4 10.6 1.1 12.75 1.1 C14.9 1.1 16.7 2.4 16.7 6.7 Z" fill="#b33b27"/><ellipse cx="12.85" cy="14.9" rx="5.5" ry="5.85" fill="none" stroke="#b33b27" stroke-width="1.55"/><path d="M12.75 13.2 V20 M3.3 6 L7.3 9.9 M21.9 5.8 L18 9.9 M1.9 13.6 H6.6 M19.3 13.6 H23.8 M3.3 22.5 L7.3 18.6 M21.9 22.5 L18 18.6" fill="none" stroke="#b33b27" stroke-width="1.55" stroke-linecap="round"/></svg>
<div class="t" style="left:452.67px;top:1442.99px;font-size:23.4px;line-height:23.4px;color:#3838b8;font-weight:400;letter-spacing:1.4034825870645395px;">1059</div>
<div class="a" style="left:452.00px;top:1464.10px;width:58px;height:1.8px;background:#3838b8"></div>
<div class="t" style="left:668.32px;top:1442.99px;font-size:23.4px;line-height:23.4px;color:#1c1c1c;font-weight:400;letter-spacing:0.25845545104571166px;">[Executions] Return the timezone error</div>
<div class="t" style="left:1289.41px;top:1442.99px;font-size:23.4px;line-height:23.4px;color:#1c1c1c;font-weight:400;letter-spacing:0.42067221406422406px;word-spacing:2.5px">3&nbsp;-&nbsp;Medium</div>
<div class="t" style="left:1537.70px;top:1442.99px;font-size:23.4px;line-height:23.4px;color:#1c1c1c;font-weight:400;letter-spacing:0.2px;">3</div>
<div class="t" style="left:1785.66px;top:1442.99px;font-size:23.4px;line-height:23.4px;color:#1c1c1c;font-weight:400;letter-spacing:0.2427312775330847px;">New</div>
<div class="a" style="left:2037.4px;top:1454.20px;width:7.3px;height:1.8px;background:#1c1c1c"></div>
<div class="a" style="left:2407.20px;top:1439.10px;width:29.6px;height:29.6px;border-radius:50%;background:#e2e3f5"></div>
<div class="t" style="left:2407.20px;top:1445.99px;width:29.6px;text-align:center;font-size:19.5px;line-height:19.5px;color:#24236e">U</div>
<div class="t" style="left:2443.39px;top:1442.09px;font-size:23.4px;line-height:23.4px;color:#1c1c1c;font-weight:400;letter-spacing:0.3435144395496738px;">Unassigned</div></body></html>
